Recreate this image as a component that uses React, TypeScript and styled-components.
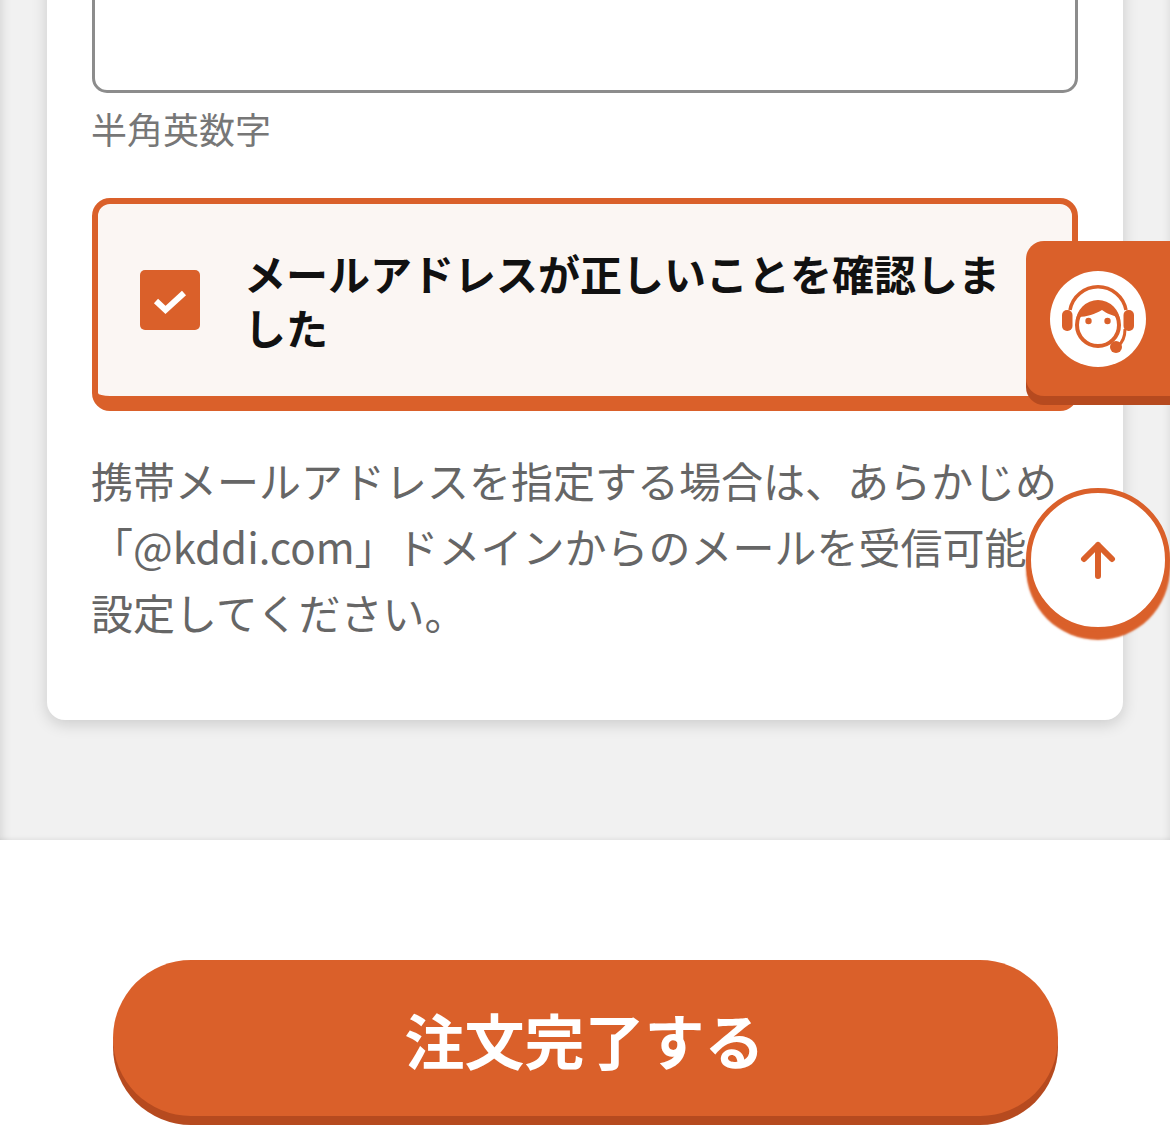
import React from "react";
import styled, { createGlobalStyle } from "styled-components";

const ORANGE = "#da602a";
const ORANGE_DARK = "#b64a1f";

const GlobalStyle = createGlobalStyle`
  html, body {
    margin: 0;
    padding: 0;
    background: #fff;
  }
  body {
    font-family: "Noto Sans CJK JP", "Noto Sans", sans-serif;
  }
  #root {
    height: 1138px;
    overflow: hidden;
    position: relative;
  }
`;

const GraySection = styled.section`
  margin-top: -40px;
  height: 880px;
  box-sizing: border-box;
  padding: 0 47px;
  background: #f1f1f1;
  box-shadow: inset 12px 0 10px -9px rgba(0, 0, 0, 0.1),
    inset -8px 0 6px -5px rgba(0, 0, 0, 0.06),
    inset 0 -4px 4px -3px rgba(0, 0, 0, 0.08);
`;

const Card = styled.div`
  height: 760px;
  box-sizing: border-box;
  padding: 0 45px;
  background: #fff;
  border-radius: 0 0 18px 18px;
  box-shadow: 0 4px 16px rgba(0, 0, 0, 0.16);
`;

const FakeInput = styled.div`
  height: 133px;
  box-sizing: border-box;
  background: #fff;
  border: 3px solid #8c8c8c;
  border-radius: 15px;
`;

const Hint = styled.p`
  margin: 10px 0 0 -1px;
  font-size: 36px;
  line-height: 50px;
  color: #777;
`;

const ConfirmBox = styled.label`
  margin-top: 45px;
  height: 213px;
  box-sizing: border-box;
  display: flex;
  align-items: center;
  gap: 44px;
  padding: 0 42px;
  background: #fbf6f3;
  border: 6px solid ${ORANGE};
  border-bottom-width: 15px;
  border-radius: 18px;
`;

const CheckMark = styled.span`
  flex: none;
  width: 60px;
  height: 60px;
  border-radius: 5px;
  background: ${ORANGE};
  display: flex;
  align-items: center;
  justify-content: center;

  svg {
    display: block;
    margin-top: 3px;
  }
`;

const ConfirmText = styled.span`
  font-size: 42px;
  line-height: 54px;
  font-weight: 700;
  color: #111;
`;

const Note = styled.p`
  margin: 36px 0 0 -1px;
  font-size: 42px;
  line-height: 66px;
  color: #666;
`;

const ButtonArea = styled.div`
  padding-top: 120px;
  display: flex;
  justify-content: center;
`;

const OrderButton = styled.button`
  width: 945px;
  height: 156px;
  margin-left: 1px;
  padding: 0 2px 0 0;
  border: none;
  border-radius: 78px;
  background: ${ORANGE};
  box-shadow: 0 9px 0 ${ORANGE_DARK};
  color: #fff;
  font-family: inherit;
  font-size: 60px;
  font-weight: 700;
`;

const SupportTab = styled.a`
  position: absolute;
  top: 241px;
  right: 0;
  width: 144px;
  height: 155px;
  border-radius: 18px 0 0 18px;
  background: ${ORANGE};
  box-shadow: 0 9px 0 ${ORANGE_DARK};
  display: flex;
  align-items: center;
  justify-content: center;

  svg {
    display: block;
    margin-top: 1px;
  }
`;

const TopButton = styled.a`
  position: absolute;
  top: 488px;
  right: 0;
  width: 144px;
  height: 144px;
  box-sizing: border-box;
  border: 5px solid ${ORANGE};
  border-radius: 50%;
  background: #fff;
  box-shadow: 0 8px 2px ${ORANGE};
  display: flex;
  align-items: center;
  justify-content: center;

  svg {
    display: block;
  }
`;

const AgentIcon = () => (
  <svg width="96" height="96" viewBox="-48 -48 96 96">
    <circle r="48" fill="#fff" />
    <circle cx="0" cy="6" r="21" fill="none" stroke={ORANGE} strokeWidth="4" />
    <path d="M-22 3A22 22 0 0 1 22 3L20 -2C14 -4 9 -5 4 -9C-3 -5 -11 -2 -20 -2Z" fill={ORANGE} />
    <circle cx="-9.5" cy="2" r="3.2" fill={ORANGE} />
    <circle cx="9.5" cy="2" r="3.2" fill={ORANGE} />
    <path d="M-28 -9A28.5 28.5 0 0 1 28 -9" fill="none" stroke={ORANGE} strokeWidth="3.5" />
    <rect x="-36" y="-9" width="10.5" height="21" rx="5" fill={ORANGE} />
    <rect x="25.5" y="-9" width="10.5" height="21" rx="5" fill={ORANGE} />
    <path d="M27 10C27 17 25 23 20 27" fill="none" stroke={ORANGE} strokeWidth="3" />
    <circle cx="18" cy="28" r="6" fill={ORANGE} />
  </svg>
);

export default function App() {
  return (
    <>
      <GlobalStyle />
      <GraySection>
        <Card>
          <FakeInput />
          <Hint>半角英数字</Hint>
          <ConfirmBox>
            <CheckMark>
              <svg width="34" height="26" viewBox="0 0 34 26">
                <path d="M3 12L12.5 21L31 4" fill="none" stroke="#fff" strokeWidth="6" />
              </svg>
            </CheckMark>
            <ConfirmText>メールアドレスが正しいことを確認しました</ConfirmText>
          </ConfirmBox>
          <Note>
            携帯メールアドレスを指定する場合は、あらかじめ「@kddi.com」ドメインからのメールを受信可能に設定してください。
          </Note>
        </Card>
      </GraySection>
      <ButtonArea>
        <OrderButton type="button">注文完了する</OrderButton>
      </ButtonArea>
      <SupportTab>
        <AgentIcon />
      </SupportTab>
      <TopButton>
        <svg width="36" height="38" viewBox="0 0 36 38">
          <path
            d="M18 35V4M4 18L18 4L32 18"
            fill="none"
            stroke={ORANGE}
            strokeWidth="6"
            strokeLinecap="round"
            strokeLinejoin="round"
          />
        </svg>
      </TopButton>
    </>
  );
}
